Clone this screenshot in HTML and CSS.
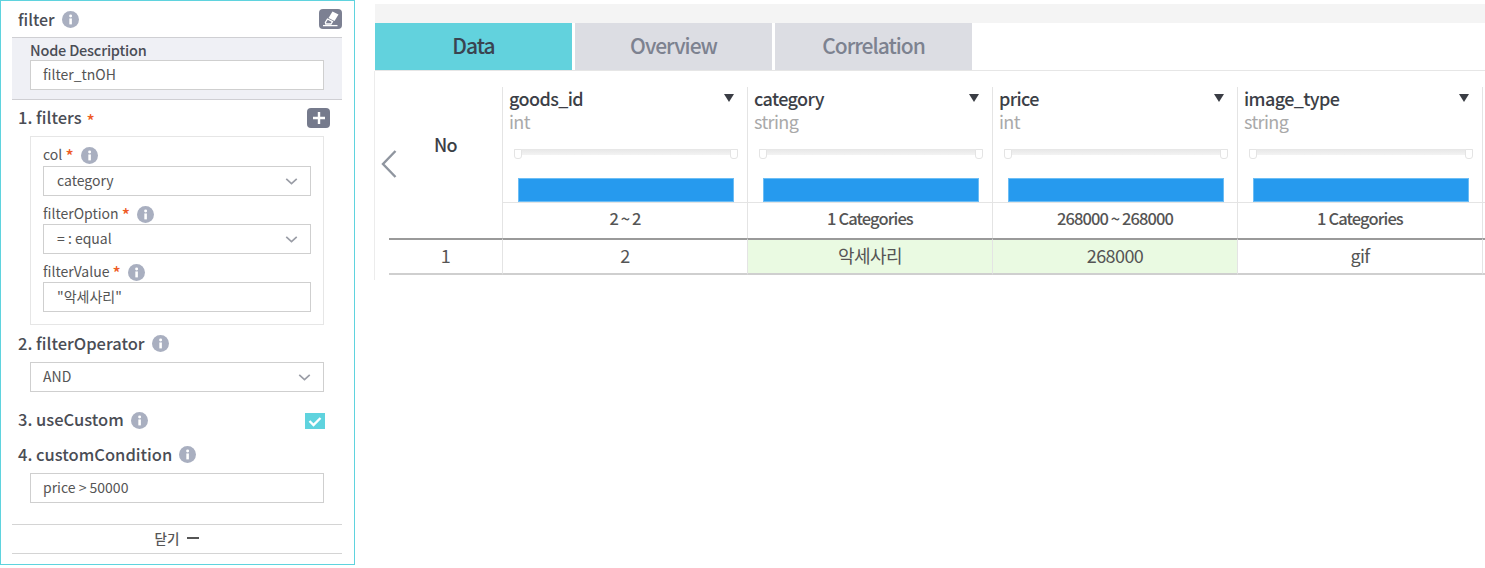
FILE: index.html
```html
<!DOCTYPE html>
<html lang="en">
<head>
  <meta charset="UTF-8" />
  <title>filter node</title>
  <link rel="stylesheet" href="styles.css">
</head>
<body>
  <svg class="defs" width="0" height="0">
    <symbol id="info" viewBox="0 0 16 16">
      <circle cx="8" cy="8" r="8" fill="#a9afc0" />
      <rect x="6.9" y="7" width="2.4" height="5.6" fill="#fff" />
      <circle cx="8.1" cy="4.6" r="1.4" fill="#fff" />
    </symbol>
    <symbol id="chev" viewBox="0 0 14 8">
      <polyline points="1,1 7,6.5 13,1" fill="none" stroke="#9a9da6" stroke-width="1.9" />
    </symbol>
    <symbol id="caret" viewBox="0 0 10 8">
      <polygon points="0,0 10,0 5,8" fill="#3a3d44" />
    </symbol>
  </svg>

  <aside class="panel">
    <div class="panel-head">
      <span class="head-title">filter</span>
      <svg class="info"><use href="#info" /></svg>
      <span class="edit-btn">
        <svg width="17" height="16" viewBox="0 0 17 16">
          <path d="M10.5 0.5 L16.5 3.5 L12.5 10 L6.5 7 Z" fill="#fff" />
          <path d="M5.5 8 L10.5 10.6 L9 13 L3.8 13 L3.4 11.4 Z" fill="none" stroke="#fff" stroke-width="1.3" />
          <path d="M1 14.6 H15.5" stroke="#fff" stroke-width="1.3" />
        </svg>
      </span>
    </div>

    <div class="desc">
      <div class="desc-label">Node Description</div>
      <div class="field tight">filter_tnOH</div>
    </div>

    <div class="sec-row sec-filters">
      <span class="sec-title">1. filters</span><span class="req">*</span>
      <span class="plus-btn">
        <svg width="12" height="12" viewBox="0 0 12 12"><path d="M6 0V12M0 6H12" stroke="#fff" stroke-width="2.4" /></svg>
      </span>
    </div>

    <div class="filter-box">
      <div class="sub-label">col <span class="req">*</span><svg class="info"><use href="#info" /></svg></div>
      <div class="field select">category<svg class="chev"><use href="#chev" /></svg></div>
      <div class="sub-label">filterOption <span class="req">*</span><svg class="info"><use href="#info" /></svg></div>
      <div class="field select">= : equal<svg class="chev"><use href="#chev" /></svg></div>
      <div class="sub-label">filterValue <span class="req">*</span><svg class="info"><use href="#info" /></svg></div>
      <div class="field">"악세사리"</div>
    </div>

    <div class="sec-row sec-op">
      <span class="sec-title">2. filterOperator</span>
      <svg class="info"><use href="#info" /></svg>
    </div>
    <div class="field select wide tight">AND<svg class="chev"><use href="#chev" /></svg></div>

    <div class="sec-row sec-use">
      <span class="sec-title">3. useCustom</span>
      <svg class="info"><use href="#info" /></svg>
      <span class="check">
        <svg width="14" height="11" viewBox="0 0 14 11"><polyline points="1.5,5 5.5,9 12.5,2" fill="none" stroke="#fff" stroke-width="2.4" /></svg>
      </span>
    </div>

    <div class="sec-row sec-cond">
      <span class="sec-title">4. customCondition</span>
      <svg class="info"><use href="#info" /></svg>
    </div>
    <div class="field wide tight">price &gt; 50000</div>

    <div class="close-row">닫기 <span class="close-dash"></span></div>
  </aside>

  <main class="result">
    <div class="strip"></div>
    <nav class="tabs">
      <div class="tab active">Data</div>
      <div class="tab">Overview</div>
      <div class="tab">Correlation</div>
    </nav>
    <div class="table-wrap">
      <svg class="prev" width="16" height="28" viewBox="0 0 16 28"><polyline points="14.5,1 2,14 14.5,27" fill="none" stroke="#8f959f" stroke-width="2.4" /></svg>
      <div class="grid">
        <div class="no-head">No</div>

        <div class="col-head">
          <div class="col-name">goods_id<svg class="caret"><use href="#caret" /></svg></div>
          <div class="col-type">int</div>
          <div class="slider"><i></i><i></i></div>
          <div class="bar"></div>
        </div>
        <div class="col-head">
          <div class="col-name">category<svg class="caret"><use href="#caret" /></svg></div>
          <div class="col-type">string</div>
          <div class="slider"><i></i><i></i></div>
          <div class="bar"></div>
        </div>
        <div class="col-head">
          <div class="col-name">price<svg class="caret"><use href="#caret" /></svg></div>
          <div class="col-type">int</div>
          <div class="slider"><i></i><i></i></div>
          <div class="bar"></div>
        </div>
        <div class="col-head">
          <div class="col-name">image_type<svg class="caret"><use href="#caret" /></svg></div>
          <div class="col-type">string</div>
          <div class="slider"><i></i><i></i></div>
          <div class="bar"></div>
        </div>
        <div class="col-head"></div>

        <div class="stat">2 ~ 2</div>
        <div class="stat">1 Categories</div>
        <div class="stat">268000 ~ 268000</div>
        <div class="stat">1 Categories</div>
        <div class="stat"></div>

        <div class="cell num">1</div>
        <div class="cell">2</div>
        <div class="cell hit">악세사리</div>
        <div class="cell hit">268000</div>
        <div class="cell">gif</div>
        <div class="cell"></div>
      </div>
    </div>
  </main>
</body>
</html>
```

FILE: styles.css
```css
html, body {
  margin: 0;
  padding: 0;
  width: 100%;
  height: 100%;
  overflow: hidden;
  background: #fff;
}
body {
  display: flex;
  align-items: flex-start;
  font-family: "Noto Sans CJK KR", "Noto Sans", sans-serif;
  color: #444;
}
.defs {
  position: absolute;
}

/* left panel */
.panel {
  box-sizing: border-box;
  flex: none;
  width: 355px;
  height: 565px;
  border: 1px solid #5fd3de;
  padding: 0 12px 0 11px;
  display: flex;
  flex-direction: column;
}
.panel-head {
  height: 36px;
  display: flex;
  align-items: center;
  padding-left: 6px;
}
.head-title {
  font-size: 16px;
  font-weight: 500;
  color: #4a4d55;
}
.info {
  flex: none;
  width: 17px;
  height: 17px;
  margin-left: 7px;
  vertical-align: -4px;
}
.edit-btn {
  margin-left: auto;
  width: 23px;
  height: 20px;
  border-radius: 4px;
  background: #7c8092;
  display: flex;
  align-items: center;
  justify-content: center;
}
.desc {
  box-sizing: border-box;
  height: 63px;
  background: #eff0f5;
  border-top: 1px solid #cfcfd3;
  border-bottom: 1px solid #cfcfd3;
  padding: 4px 18px 0;
}
.desc-label {
  height: 18px;
  line-height: 16px;
  font-size: 14.5px;
  font-weight: 500;
  letter-spacing: -0.2px;
  color: #4a4d55;
}
.field {
  box-sizing: border-box;
  height: 30px;
  border: 1px solid #cfcfcf;
  background: #fff;
  padding: 0 0 2px 13px;
  font-size: 14px;
  line-height: 20px;
  color: #555;
  display: flex;
  align-items: center;
  justify-content: space-between;
}
.field.tight {
  padding-left: 12px;
}
.select .chev {
  width: 13px;
  height: 7px;
  margin-right: 12px;
  margin-top: 2px;
}
.wide {
  flex: none;
  margin: 0 18px;
}
.sec-row {
  display: flex;
  align-items: center;
  padding-left: 6px;
}
.sec-title {
  font-size: 16.5px;
  line-height: 22px;
  font-weight: 500;
  color: #4a4d55;
  padding-bottom: 2px;
}
.req {
  color: #ee5a24;
  font-size: 17px;
  line-height: 16px;
  font-weight: 500;
  margin: 5px 0 0 5px;
}
.sec-filters {
  height: 36px;
  padding-right: 12px;
}
.plus-btn {
  margin-left: auto;
  width: 23px;
  height: 20px;
  border-radius: 4px;
  background: #757a8c;
  display: flex;
  align-items: center;
  justify-content: center;
}
.filter-box {
  box-sizing: border-box;
  height: 189px;
  margin: 0 18px;
  border: 1px solid #e6e6e6;
  padding: 8px 12px 0;
}
.sub-label {
  height: 20px;
  line-height: 18px;
  font-size: 14px;
  color: #555;
  margin-top: 8px;
}
.sub-label:first-child {
  height: 21px;
  margin-top: 0;
}
.sub-label .req {
  margin: 0;
  vertical-align: -3px;
}
.sec-op {
  height: 37px;
}
.sec-use {
  height: 36px;
  margin-top: 10px;
  padding-right: 17px;
}
.check {
  margin: 2px 0 0 auto;
  width: 20px;
  height: 16px;
  background: #5fd3de;
  display: flex;
  align-items: center;
  justify-content: center;
}
.sec-cond {
  height: 35px;
  padding-bottom: 2px;
  box-sizing: border-box;
}
.close-row {
  box-sizing: border-box;
  margin-top: 21px;
  height: 30px;
  border-top: 1px solid #d4d4d4;
  border-bottom: 1px solid #d4d4d4;
  display: flex;
  align-items: center;
  justify-content: center;
  gap: 8px;
  font-size: 13.5px;
  line-height: 20px;
  padding-bottom: 2px;
  font-weight: 500;
  color: #555;
}
.close-dash {
  width: 12px;
  height: 2px;
  background: #555;
}

/* right side */
.result {
  flex: 1;
  margin-left: 20px;
  padding-top: 4px;
  min-width: 0;
}
.strip {
  height: 19px;
  background: #f4f4f4;
}
.tabs {
  display: flex;
  gap: 3px;
  height: 47px;
  border-bottom: 1px solid #e6e6e6;
}
.tab {
  width: 197px;
  height: 47px;
  line-height: 45px;
  text-align: center;
  background: #dcdde3;
  color: #7d8290;
  font-size: 21px;
  font-weight: 500;
  letter-spacing: -1px;
}
.tab.active {
  background: #62d2dd;
  color: #3a4450;
}
.table-wrap {
  box-sizing: border-box;
  position: relative;
  margin-left: -1px;
  border-left: 1px solid #ececec;
  height: 209px;
  padding: 16px 0 0 14px;
}
.prev {
  position: absolute;
  left: 6px;
  top: 79px;
}
.grid {
  display: grid;
  grid-template-columns: 113px repeat(4, 245px) 1fr;
  grid-template-rows: 115px 36px 37px;
}
.no-head {
  grid-row: 1 / 3;
  display: flex;
  align-items: center;
  justify-content: center;
  padding-bottom: 37px;
  font-size: 18px;
  font-weight: 500;
  letter-spacing: -0.6px;
  color: #3c3f47;
}
.col-head {
  box-sizing: border-box;
  border-left: 1px solid #e4e4e4;
  padding: 0 0 0 6px;
  min-width: 0;
}
.col-name {
  display: flex;
  align-items: center;
  justify-content: space-between;
  height: 22px;
  line-height: 22px;
  padding-right: 13px;
  font-size: 18px;
  font-weight: 500;
  letter-spacing: -0.6px;
  color: #3c3f47;
}
.caret {
  width: 10px;
  height: 8px;
}
.col-type {
  height: 22px;
  line-height: 22px;
  margin-top: 1px;
  font-size: 18px;
  letter-spacing: -0.6px;
  color: #a9a9a9;
}
.slider {
  position: relative;
  height: 6px;
  margin: 17px 9px 0 5px;
  background: linear-gradient(#e6e6e6, #f3f3f3);
}
.slider i {
  position: absolute;
  top: 0;
  left: 0;
  box-sizing: border-box;
  width: 8px;
  height: 10px;
  background: #fff;
  border: 1px solid #e4e4e4;
  border-radius: 0 0 3px 3px;
}
.slider i:last-child {
  left: auto;
  right: 0;
}
.bar {
  box-sizing: border-box;
  height: 24px;
  margin: 23px 13px 0 9px;
  background: #269aee;
  border: 1px solid #6bbdf5;
}
.stat {
  box-sizing: border-box;
  grid-row: 2;
  line-height: 30px;
  text-align: center;
  font-size: 16.5px;
  font-weight: 500;
  letter-spacing: -0.9px;
  color: #555;
  border-left: 1px solid #e4e4e4;
  border-top: 1px solid #e4e4e4;
}
.cell {
  box-sizing: border-box;
  grid-row: 3;
  line-height: 31px;
  text-align: center;
  font-size: 18px;
  letter-spacing: -0.6px;
  color: #555;
  border-left: 1px solid #e4e4e4;
  border-top: 2px solid #9a9a9a;
  border-bottom: 2px solid #cfcfcf;
}
.cell.num {
  border-left: none;
}
.cell.hit {
  background: #eafae2;
  line-height: 30px;
}
```
